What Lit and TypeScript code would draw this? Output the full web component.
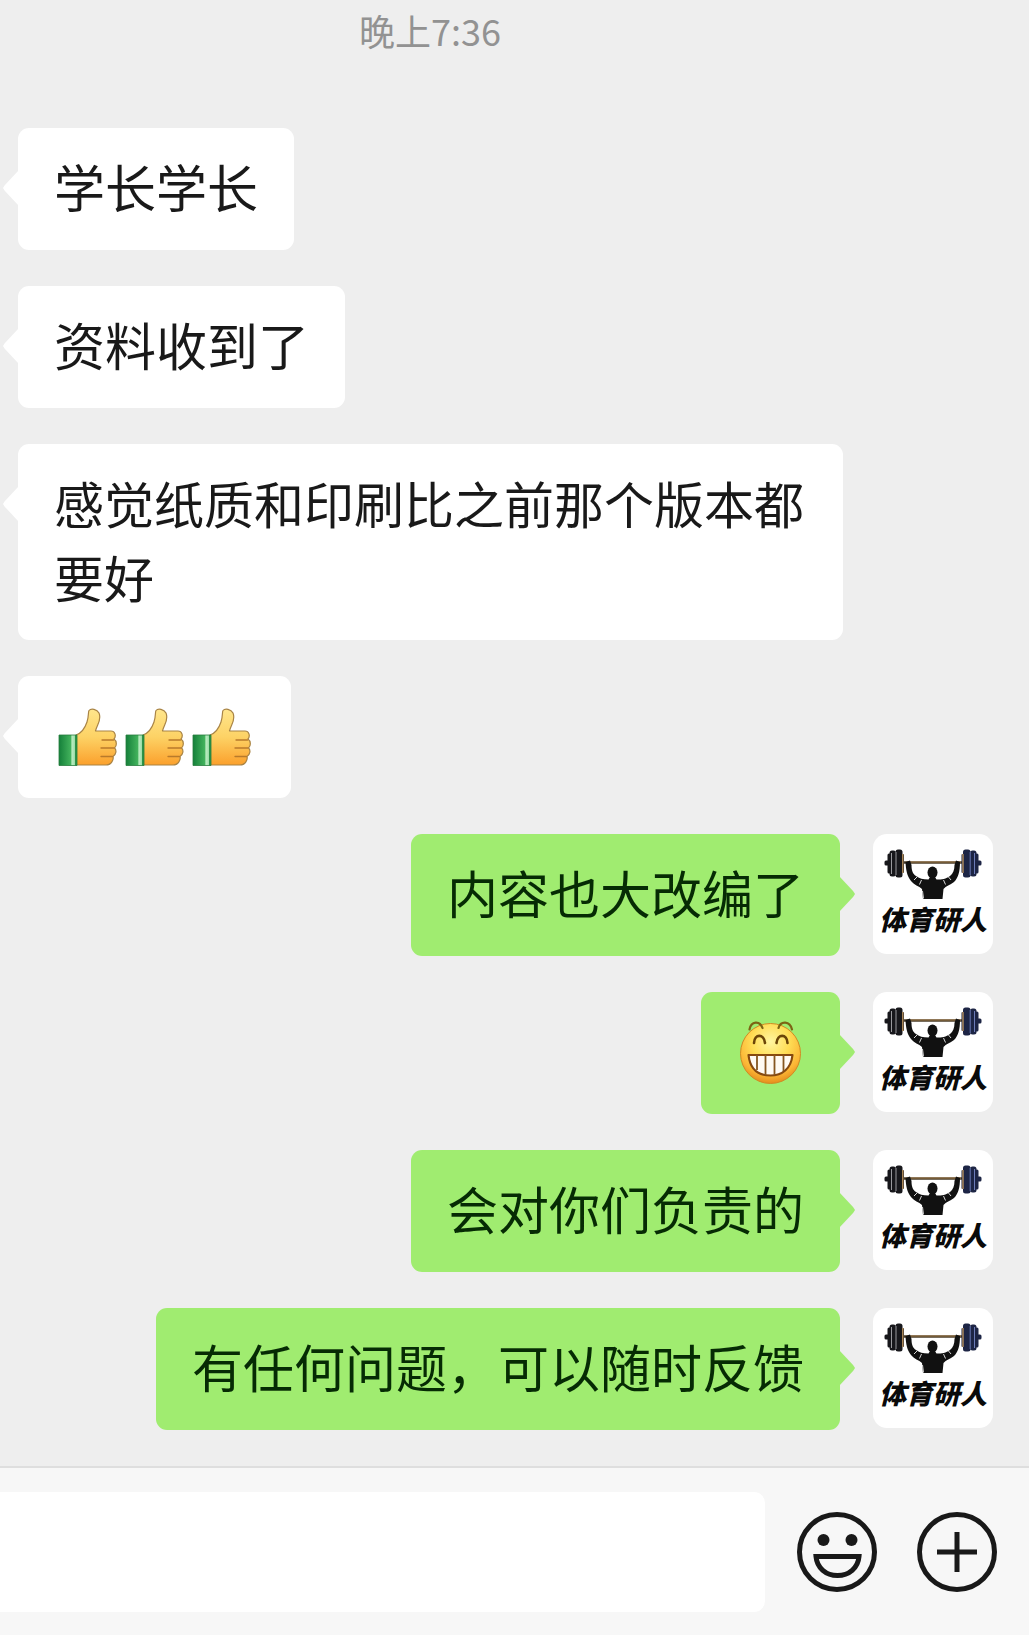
import { LitElement, css, html, svg } from "lit";
import { customElement, property } from "lit/decorators.js";

type EmojiName = "thumb" | "grin";

interface Message {
  mine: boolean;
  text?: string;
  emoji?: EmojiName[];
}

const MESSAGES: Message[] = [
  { mine: false, text: "学长学长" },
  { mine: false, text: "资料收到了" },
  { mine: false, text: "感觉纸质和印刷比之前那个版本都要好" },
  { mine: false, emoji: ["thumb", "thumb", "thumb"] },
  { mine: true, text: "内容也大改编了" },
  { mine: true, emoji: ["grin"] },
  { mine: true, text: "会对你们负责的" },
  { mine: true, text: "有任何问题，可以随时反馈" },
];

/* Messages longer than one line use the compact text size. */
const ONE_LINE = 14;

@customElement("chat-emoji")
class ChatEmoji extends LitElement {
  @property() name: EmojiName = "thumb";

  static styles = css`
    :host {
      display: block;
      width: 67px;
      height: 67px;
    }
    .art {
      display: block;
      width: 100%;
      height: 100%;
    }
  `;

  private thumb() {
    return svg`
      <defs>
        <linearGradient id="skin" x1="0" y1="0" x2="0" y2="1">
          <stop offset="0" stop-color="#ffe68c" />
          <stop offset="0.5" stop-color="#fdd265" />
          <stop offset="1" stop-color="#fba02c" />
        </linearGradient>
        <linearGradient id="cuff" x1="0" y1="0" x2="1" y2="0">
          <stop offset="0" stop-color="#15803a" />
          <stop offset="0.65" stop-color="#42b25c" />
          <stop offset="0.72" stop-color="#b9ecc0" />
          <stop offset="0.86" stop-color="#a3e0ae" />
          <stop offset="0.9" stop-color="#2c9448" />
          <stop offset="1" stop-color="#2c9448" />
        </linearGradient>
      </defs>
      <path fill="url(#skin)" stroke="#a98445" stroke-width="1.2" stroke-linejoin="round"
        d="M22 31 C28 29 31 24 33 18 C35 12 34 8 35 6.500 C37 4 43 5 45 9 C48 16 43 20 41.500 27 H57 C61 27 62.500 32 60 35 C63 37 63 42 60.500 44 C63 46 62 51 59 52.500 C60 56 57 61 52 61 H22 Z" />
      <path fill="none" stroke="#b87a2b" stroke-width="1.3" stroke-linecap="round"
        d="M48 36 H59.500 M47 44 H60 M47 52.500 H58.500" />
      <path fill="url(#cuff)" stroke="#277c3d" stroke-width="0.800" d="M5 31 H23 V61.500 H5 Z" />
    `;
  }

  private grin() {
    return svg`
      <defs>
        <radialGradient id="face" cx="0.5" cy="0.3" r="0.7">
          <stop offset="0" stop-color="#fff5a0" />
          <stop offset="0.45" stop-color="#ffdd55" />
          <stop offset="0.8" stop-color="#fbb535" />
          <stop offset="1" stop-color="#e58d1c" />
        </radialGradient>
      </defs>
      <circle cx="33.500" cy="33.500" r="30" fill="url(#face)" stroke="#cf8b24" stroke-width="1" />
      <g fill="none" stroke-linecap="round">
        <path stroke="#7d6414" stroke-width="2.200"
          d="M12.500 9.500 C14 0.500 23 0.500 25.500 8 M41.500 8 C43.500 0.500 53 0.500 55 9.500" />
        <path stroke="#6b4508" stroke-width="2.600"
          d="M17 23 C17.500 13.500 27 13.500 28 23 M39.500 23 C40.500 13.500 50 13.500 50.500 23" />
      </g>
      <path fill="#fffaf2" stroke="#86490f" stroke-width="2.200" stroke-linejoin="round"
        d="M11.500 35 H55.500 C54 49 45 55.500 33.500 55.500 C21 55.500 13 49 11.500 35 Z" />
      <path fill="none" stroke="#86561f" stroke-width="1.800"
        d="M20 35 V50 M28.500 35 V55 M37.500 35 V55 M46.500 35 V51" />
    `;
  }

  render() {
    const label = this.name === "thumb" ? "强" : "呲牙";
    return html`<svg class="art" viewBox="0 0 67 67" role="img" aria-label=${label}>
      ${this.name === "thumb" ? this.thumb() : this.grin()}
    </svg>`;
  }
}

@customElement("chat-avatar")
class ChatAvatar extends LitElement {
  static styles = css`
    :host {
      display: block;
      flex: none;
      width: 120px;
      height: 120px;
      border-radius: 14px;
      overflow: hidden;
      background: #fff;
    }
    .art {
      display: block;
      width: 100%;
      height: 100%;
    }
    .name {
      font: italic 900 27px "Noto Sans CJK SC", sans-serif;
      fill: #0a0a0a;
    }
  `;

  render() {
    return html`<svg class="art" viewBox="0 0 120 120">
      <path d="M30 28.500 H90" stroke="#4a3c28" stroke-width="2.400" />
      <path d="M33 28 H88" stroke="#b58c52" stroke-width="0.800" />
      <g fill="#17171b">
        <rect x="11.500" y="26.500" width="6" height="5" rx="1.500" />
        <rect x="14.500" y="19.500" width="3.500" height="20" rx="1.500" />
        <rect x="16.500" y="16.500" width="6.500" height="26" rx="2.500" />
        <rect x="22.500" y="15.500" width="7" height="28" rx="2.500" />
        <rect x="28" y="20" width="3" height="19" rx="1" />
      </g>
      <path d="M18.500 19 V40 M23 18 V41" stroke="#a9a9ae" stroke-width="0.900" />
      <path d="M29.800 20 V39" stroke="#c39a62" stroke-width="1.300" />
      <g fill="#1d2545">
        <rect x="102.500" y="26.500" width="6" height="5" rx="1.500" />
        <rect x="102" y="19.500" width="3.500" height="20" rx="1.500" />
        <rect x="97" y="16.500" width="6.500" height="26" rx="2.500" />
        <rect x="90" y="15.500" width="7.500" height="28" rx="2.500" />
        <rect x="88.500" y="20" width="3" height="19" rx="1" />
      </g>
      <path d="M97.200 18 V41 M101.500 19 V40" stroke="#7486c4" stroke-width="0.900" />
      <path d="M90 20 V39" stroke="#c39a62" stroke-width="1.300" />
      <g fill="#111">
        <path d="M32.500 28 L37 26.500 L38.500 31 C38.500 37 40 40 43 42 C46 44.500 50 45.500 55.500 45.500 L57 43 H62 L63.500 45.500 C69 45.500 73 45 77 42 C80 39.500 81.500 36 81.500 31 L83 26.500 L87 28 C87 38 85 44 81 48 C77 51 73 52 70.500 55 L69.500 65 H50 L49 55 C46 52 41 51 38 47 C34 42 33 36 32.500 28 Z" />
        <ellipse cx="59.500" cy="38.500" rx="5" ry="6" />
      </g>
      <path d="M41 46 L44.500 42.500 M46.500 50.500 L48.500 46 M78 46 L75.500 43 M72.500 50.500 L70.500 46 M50.500 64.500 L49.500 57" stroke="#d8d8d8" stroke-width="1" />
      <text class="name" x="6" y="96">体育研人</text>
    </svg>`;
  }
}

@customElement("app-root")
class AppRoot extends LitElement {
  static styles = css`
    :host {
      display: block;
      font-family: "Noto Sans CJK SC", sans-serif;
      color: #191919;
    }
    .page {
      display: flex;
      flex-direction: column;
      min-height: 100vh;
      background: #eee;
    }
    .chat {
      flex: 1;
      display: flex;
      flex-direction: column;
      padding: 6px 36px 36px 18px;
    }
    .time {
      padding: 0 151px 74px 0;
      font-size: 36px;
      line-height: 48px;
      text-align: center;
      color: #929292;
    }
    .messages {
      display: flex;
      flex-direction: column;
      gap: 36px;
      margin: 0;
      padding: 0;
      list-style: none;
    }
    .row {
      display: flex;
      align-items: flex-start;
      gap: 33px;
    }
    .row.mine {
      justify-content: flex-end;
    }
    .bubble {
      position: relative;
      max-width: 825px;
      box-sizing: border-box;
      padding: 21px 36px 27px;
      border-radius: 11px;
      background: #fff;
      font-size: 51px;
      line-height: 74px;
    }
    .bubble.long {
      font-size: 50px;
    }
    .bubble.emoji {
      display: flex;
      align-items: center;
      height: 122px;
      padding: 0 36px;
    }
    .bubble::before {
      content: "";
      position: absolute;
      top: 42px;
      left: -15px;
      width: 16px;
      height: 36px;
      background: #fff;
      clip-path: polygon(100% 0, 12% 42%, 0 50%, 12% 58%, 100% 100%);
    }
    .mine .bubble {
      background: #a0ec70;
      color: #062b04;
    }
    .mine .bubble::before {
      left: auto;
      right: -15px;
      background: #a0ec70;
      clip-path: polygon(0 0, 88% 42%, 100% 50%, 88% 58%, 0 100%);
    }
    .composer {
      display: flex;
      align-items: center;
      gap: 40px;
      padding: 24px 32px 23px 0;
      border-top: 2px solid #dedede;
      background: #f7f7f7;
    }
    .field {
      flex: 1;
      min-width: 0;
      height: 120px;
      margin-right: -8px;
      box-sizing: border-box;
      padding: 0 36px;
      border: 0;
      border-radius: 0 11px 11px 0;
      outline: 0;
      background: #fff;
      font: inherit;
      font-size: 51px;
    }
    .tool {
      flex: none;
      width: 80px;
      height: 80px;
      padding: 0;
      border: 0;
      background: none;
      color: #191919;
      cursor: pointer;
    }
    .icon {
      display: block;
      width: 100%;
      height: 100%;
      fill: none;
      stroke: currentColor;
      stroke-width: 5;
    }
    .dot {
      fill: currentColor;
      stroke: none;
    }
  `;

  private bubble(m: Message) {
    if (m.emoji) {
      return html`<div class="bubble emoji">
        ${m.emoji.map((name) => html`<chat-emoji name=${name}></chat-emoji>`)}
      </div>`;
    }
    const long = (m.text ?? "").length > ONE_LINE;
    return html`<div class=${long ? "bubble long" : "bubble"}>${m.text}</div>`;
  }

  render() {
    return html`<main class="page">
      <section class="chat">
        <time class="time">晚上7:36</time>
        <ul class="messages">
          ${MESSAGES.map(
            (m) => html`<li class=${m.mine ? "row mine" : "row"}>
              ${this.bubble(m)} ${m.mine ? html`<chat-avatar></chat-avatar>` : ""}
            </li>`,
          )}
        </ul>
      </section>
      <form class="composer" @submit=${(e: Event) => e.preventDefault()}>
        <input class="field" type="text" aria-label="消息" />
        <button class="tool" type="button" aria-label="表情">
          <svg class="icon" viewBox="0 0 80 80">
            <circle cx="40" cy="40" r="37.500" />
            <circle class="dot" cx="26.500" cy="28" r="6" />
            <circle class="dot" cx="54.500" cy="28" r="6" />
            <path d="M19 44.500 H62 C61 56 52 63.500 40.500 63.500 C29 63.500 20 56 19 44.500 Z" />
          </svg>
        </button>
        <button class="tool" type="button" aria-label="更多">
          <svg class="icon" viewBox="0 0 80 80">
            <circle cx="40" cy="40" r="37.500" />
            <path d="M40 20 V60 M20 40 H60" />
          </svg>
        </button>
      </form>
    </main>`;
  }
}
